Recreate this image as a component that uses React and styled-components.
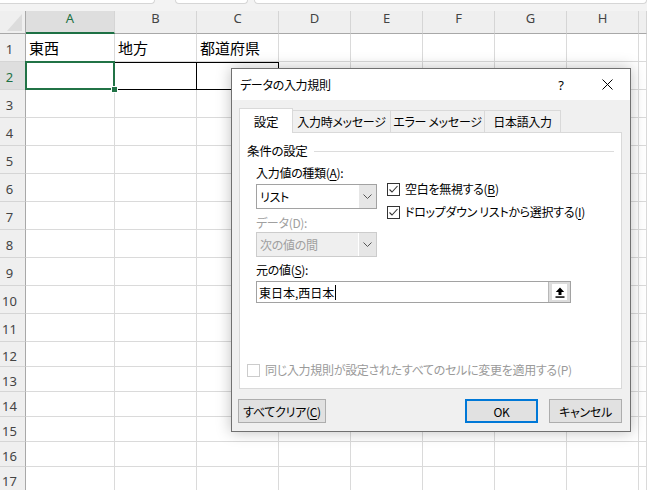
import React from "react";
import styled, {createGlobalStyle, css} from "styled-components";

const GlobalStyle = createGlobalStyle`
  html, body {
    margin: 0;
    padding: 0;
    background: #fff;
    overflow: hidden;
  }
  body {
    font-family: "Noto Sans CJK JP", "Noto Sans", sans-serif;
  }
`

const Page = styled.div`
  position: relative;
  width: 647px;
  height: 490px;
  overflow: hidden;
  background: #fff;
`

// strip of the formula bar above the sheet
const TopStrip = styled.div`
  display: flex;
  height: 11px;
  background: #f3f3f3;
`

const StripBox = styled.div`
  box-sizing: border-box;
  height: 4px;
  width: ${p => p.$w ? `${p.$w}px` : "auto"};
  flex: ${p => p.$w ? "none" : 1};
  margin-left: ${p => p.$ml || 0}px;
  background: #fff;
  border: 1px solid #d6d6d6;
  border-top: none;
  border-radius: 0 0 5px 5px;
`

const Sheet = styled.div`
  display: grid;
  grid-template-columns: 26px 89px 82px 82px repeat(5, 72px) 1fr;
  grid-template-rows: 23px repeat(11, 28px) repeat(6, 25px);
  font-family: "Noto Sans", sans-serif;
`

const Corner = styled.div`
  position: relative;
  background: #efefef;
  border-right: 1px solid #a8a8a8;
  border-bottom: 1px solid #a8a8a8;
  box-sizing: border-box;

  &::after {
    content: "";
    position: absolute;
    right: 3px;
    bottom: 2px;
    width: 15px;
    height: 17px;
    background: #dcdcdc;
    clip-path: polygon(100% 0, 100% 100%, 0 100%);
  }
`

const ColHead = styled.div`
  box-sizing: border-box;
  background: ${p => p.$active ? "#dedede" : "#efefef"};
  color: ${p => p.$active ? "#1e7145" : "#444"};
  border-right: 1px solid #d5d5d5;
  border-bottom: ${p => p.$active ? "2px solid #1e7145" : "1px solid #a8a8a8"};
  font-size: 13px;
  line-height: 15px;
  text-align: center;
`

const RowHead = styled.div`
  box-sizing: border-box;
  background: ${p => p.$active ? "#dedede" : "#efefef"};
  color: ${p => p.$active ? "#1e7145" : "#444"};
  border-right: 1px solid #a8a8a8;
  border-bottom: 1px solid #d5d5d5;
  font-size: 13px;
  display: flex;
  align-items: center;
  justify-content: center;
  padding: 3px 6px 0 0;
`

const Cell = styled.div`
  position: relative;
  box-sizing: border-box;
  border-right: 1px solid #dadada;
  border-bottom: 1px solid #dadada;
  font-family: "Noto Sans CJK JP", sans-serif;
  font-size: 15px;
  color: #000;
  padding-left: 3px;
  display: flex;
  align-items: center;
  white-space: nowrap;

  ${p => p.$box && css`
    border-top: 1px solid #000;
    border-right-color: #000;
    border-bottom-color: #000;
  `}

  ${p => p.$active && css`
    z-index: 2;
    &::before {
      content: "";
      position: absolute;
      inset: -1px;
      border: 2px solid #217346;
    }
  `}
`

const FillHandle = styled.span`
  position: absolute;
  right: -4px;
  bottom: -4px;
  width: 5px;
  height: 5px;
  background: #217346;
  border: 1px solid #fff;
  z-index: 3;
`

// dialog
const Dialog = styled.div`
  position: absolute;
  left: 231px;
  top: 68px;
  width: 400px;
  height: 364px;
  box-sizing: border-box;
  border: 1px solid #707070;
  background: #f0f0f0;
  box-shadow: 0 0 14px rgba(0, 0, 0, 0.25);
  display: flex;
  flex-direction: column;
  font-family: "Noto Sans CJK JP", sans-serif;
  font-feature-settings: "palt" 1;
  letter-spacing: -0.3px;
  font-size: 12px;
  color: #000;
  z-index: 10;
`

const TitleBar = styled.div`
  display: flex;
  align-items: center;
  height: 31px;
  background: #fff;
  padding-left: 8px;
`

const Title = styled.div`
  flex: 1;
  font-size: 12px;
`

const TitleButton = styled.div`
  width: 46px;
  height: 31px;
  display: flex;
  align-items: center;
  justify-content: center;
  font-family: "Noto Sans", sans-serif;
  font-size: 13px;
`

const Body = styled.div`
  flex: 1;
  display: flex;
  flex-direction: column;
  padding: 8px 8px 0 7px;
`

const TabRow = styled.div`
  display: flex;
  align-items: flex-end;
  height: 24px;
  position: relative;
  z-index: 1;
`

const Tab = styled.div`
  box-sizing: border-box;
  width: ${p => p.$w}px;
  height: 22px;
  margin-left: -1px;
  display: flex;
  align-items: center;
  justify-content: center;
  background: #f0f0f0;
  border: 1px solid #d9d9d9;
  border-bottom: none;
  white-space: nowrap;

  &:first-child {
    margin-left: 0;
  }

  ${p => p.$selected && css`
    height: 25px;
    margin-bottom: -1px;
    background: #fff;
    font-size: 12.5px;
  `}
`

const Panel = styled.div`
  box-sizing: border-box;
  height: 257px;
  background: #fff;
  border: 1px solid #d9d9d9;
  padding: 10px 7px 10px 7px;
  display: flex;
  flex-direction: column;
`

const Legend = styled.div`
  display: flex;
  align-items: center;
  gap: 6px;
  line-height: 16px;
  font-size: 12.5px;

  &::after {
    content: "";
    flex: 1;
    height: 1px;
    background: #dcdcdc;
  }
`

const Indent = styled.div`
  padding-left: 9px;
  display: flex;
  flex-direction: column;
`

const FormTop = styled.div`
  display: flex;
`

const LeftCol = styled.div`
  width: 121px;
  display: flex;
  flex-direction: column;
`

const RightCol = styled.div`
  margin-left: 10px;
  padding-top: 22px;
  display: flex;
  flex-direction: column;
  gap: 7px;
`

const Label = styled.div`
  line-height: 16px;
  margin-top: ${p => p.$mt || 0}px;
  color: ${p => p.$disabled ? "#a0a0a0" : "#000"};
  white-space: nowrap;
`

const Key = styled.span`
  text-decoration: underline;
  text-underline-offset: 2px;
`

const Select = styled.div`
  box-sizing: border-box;
  display: flex;
  height: 25px;
  margin-top: ${p => p.$mt || 0}px;
  border: 1px solid ${p => p.$disabled ? "#cccccc" : "#a2a2a2"};
  background: ${p => p.$disabled ? "#efefef" : "#fff"};
  color: ${p => p.$disabled ? "#a0a0a0" : "#000"};
`

const SelectText = styled.div`
  flex: 1;
  display: flex;
  align-items: center;
  padding-left: 3px;
`

const SelectArrow = styled.div`
  width: 17px;
  display: flex;
  align-items: center;
  justify-content: center;
  background: #e6e6e6;
  border-left: 1px solid #fff;
`

const CheckRow = styled.div`
  display: flex;
  align-items: center;
  gap: 5px;
  height: 16px;
  white-space: nowrap;
  color: ${p => p.$disabled ? "#9a9a9a" : "#000"};
  margin-top: ${p => p.$auto ? "auto" : "0"};
`

const CheckText = styled.span`
  line-height: 16px;
`

const Box = styled.span`
  box-sizing: border-box;
  width: 13px;
  height: 13px;
  border: 1px solid ${p => p.$disabled ? "#cccccc" : "#333"};
  background: #fff;
  display: flex;
  align-items: center;
  justify-content: center;
`

const Input = styled.div`
  box-sizing: border-box;
  display: flex;
  width: 315px;
  height: 22px;
  margin-top: 3px;
  border: 1px solid #a2a2a2;
  background: #fff;
`

const InputText = styled.div`
  flex: 1;
  display: flex;
  align-items: center;
  padding-left: 2px;
  letter-spacing: 0;
`

const Caret = styled.span`
  width: 1px;
  height: 15px;
  margin-left: 1px;
  background: #000;
`

const RefButton = styled.div`
  width: 21px;
  display: flex;
  align-items: center;
  justify-content: center;
  background: #dcdcdc;
  border-left: 1px solid #b8b8b8;
`

const RefInner = styled.div`
  width: 15px;
  height: 16px;
  background: #fff;
  display: flex;
  align-items: center;
  justify-content: center;
`

const Footer = styled.div`
  display: flex;
  align-items: center;
  margin: 10px 0 0 -1px;
`

const Button = styled.div`
  box-sizing: border-box;
  width: ${p => p.$w}px;
  height: 24px;
  margin-left: ${p => p.$ml || 0}px;
  display: flex;
  align-items: center;
  justify-content: center;
  background: #e1e1e1;
  border: ${p => p.$default ? "2px solid #0078d7" : "1px solid #adadad"};
  white-space: nowrap;
`

const Spacer = styled.div`
  flex: 1;
`

const Chevron = () => (
    <svg width="9" height="5" viewBox="0 0 9 5">
        <polyline points="0.5,0.5 4.5,4.5 8.5,0.5" fill="none" stroke="#555" strokeWidth="1"/>
    </svg>
);

const Check = () => (
    <svg width="11" height="11" viewBox="0 0 11 11">
        <polyline points="1.5,5.5 4,8 9.5,2" fill="none" stroke="#333" strokeWidth="1.1"/>
    </svg>
);

const COLS = ["A", "B", "C", "D", "E", "F", "G", "H", ""];
const ROW1 = ["東西", "地方", "都道府県"];

const App = () => {
    return (
        <Page>
            <GlobalStyle/>
            <TopStrip>
                <StripBox $w={160} $ml={-5}/>
                <StripBox $w={73} $ml={20}/>
                <StripBox $ml={6}/>
            </TopStrip>

            <Sheet>
                <Corner/>
                {COLS.map(c => (
                    <ColHead key={"h" + c} $active={c === "A"}>{c}</ColHead>
                ))}
                {Array.from({length: 17}, (_, i) => {
                    const r = i + 1;
                    return (
                        <React.Fragment key={r}>
                            <RowHead $active={r === 2}>{r}</RowHead>
                            {COLS.map((c, j) => (
                                <Cell
                                    key={c + r}
                                    $active={r === 2 && j === 0}
                                    $box={r === 2 && (j === 1 || j === 2)}
                                >
                                    {r === 1 ? ROW1[j] : null}
                                    {r === 2 && j === 0 && <FillHandle/>}
                                </Cell>
                            ))}
                        </React.Fragment>
                    );
                })}
            </Sheet>

            <Dialog>
                <TitleBar>
                    <Title>データの入力規則</Title>
                    <TitleButton>?</TitleButton>
                    <TitleButton>
                        <svg width="11" height="11" viewBox="0 0 11 11">
                            <path d="M0.5 0.5 L10.5 10.5 M10.5 0.5 L0.5 10.5" stroke="#000" strokeWidth="1"/>
                        </svg>
                    </TitleButton>
                </TitleBar>

                <Body>
                    <TabRow>
                        <Tab $w={54} $selected>設定</Tab>
                        <Tab $w={99}>入力時メッセージ</Tab>
                        <Tab $w={95}>エラー メッセージ</Tab>
                        <Tab $w={77}>日本語入力</Tab>
                    </TabRow>

                    <Panel>
                        <Legend>条件の設定</Legend>
                        <Indent>
                            <FormTop>
                                <LeftCol>
                                    <Label $mt={6}>入力値の種類(<Key>A</Key>):</Label>
                                    <Select $mt={3}>
                                        <SelectText>リスト</SelectText>
                                        <SelectArrow><Chevron/></SelectArrow>
                                    </Select>
                                    <Label $mt={6} $disabled>データ(D):</Label>
                                    <Select $mt={1} $disabled>
                                        <SelectText>次の値の間</SelectText>
                                        <SelectArrow><Chevron/></SelectArrow>
                                    </Select>
                                </LeftCol>
                                <RightCol>
                                    <CheckRow>
                                        <Box><Check/></Box>
                                        <CheckText>空白を無視する(<Key>B</Key>)</CheckText>
                                    </CheckRow>
                                    <CheckRow>
                                        <Box><Check/></Box>
                                        <CheckText>ドロップダウン リストから選択する(<Key>I</Key>)</CheckText>
                                    </CheckRow>
                                </RightCol>
                            </FormTop>
                            <Label $mt={5}>元の値(<Key>S</Key>):</Label>
                            <Input>
                                <InputText>東日本,西日本<Caret/></InputText>
                                <RefButton>
                                    <RefInner>
                                        <svg width="10" height="11" viewBox="0 0 10 11">
                                            <path d="M5 0.5 L9.2 5 H6.5 V8 H3.5 V5 H0.8 Z" fill="#000"/>
                                            <rect x="0.5" y="9.3" width="9" height="1.5" fill="#000"/>
                                        </svg>
                                    </RefInner>
                                </RefButton>
                            </Input>
                        </Indent>
                        <CheckRow $disabled $auto>
                            <Box $disabled/>
                            <CheckText>同じ入力規則が設定されたすべてのセルに変更を適用する(P)</CheckText>
                        </CheckRow>
                    </Panel>

                    <Footer>
                        <Button $w={88}>すべてクリア(<Key>C</Key>)</Button>
                        <Spacer/>
                        <Button $w={73} $default>OK</Button>
                        <Button $w={73} $ml={11}>キャンセル</Button>
                    </Footer>
                </Body>
            </Dialog>
        </Page>
    );
}

export default App;
